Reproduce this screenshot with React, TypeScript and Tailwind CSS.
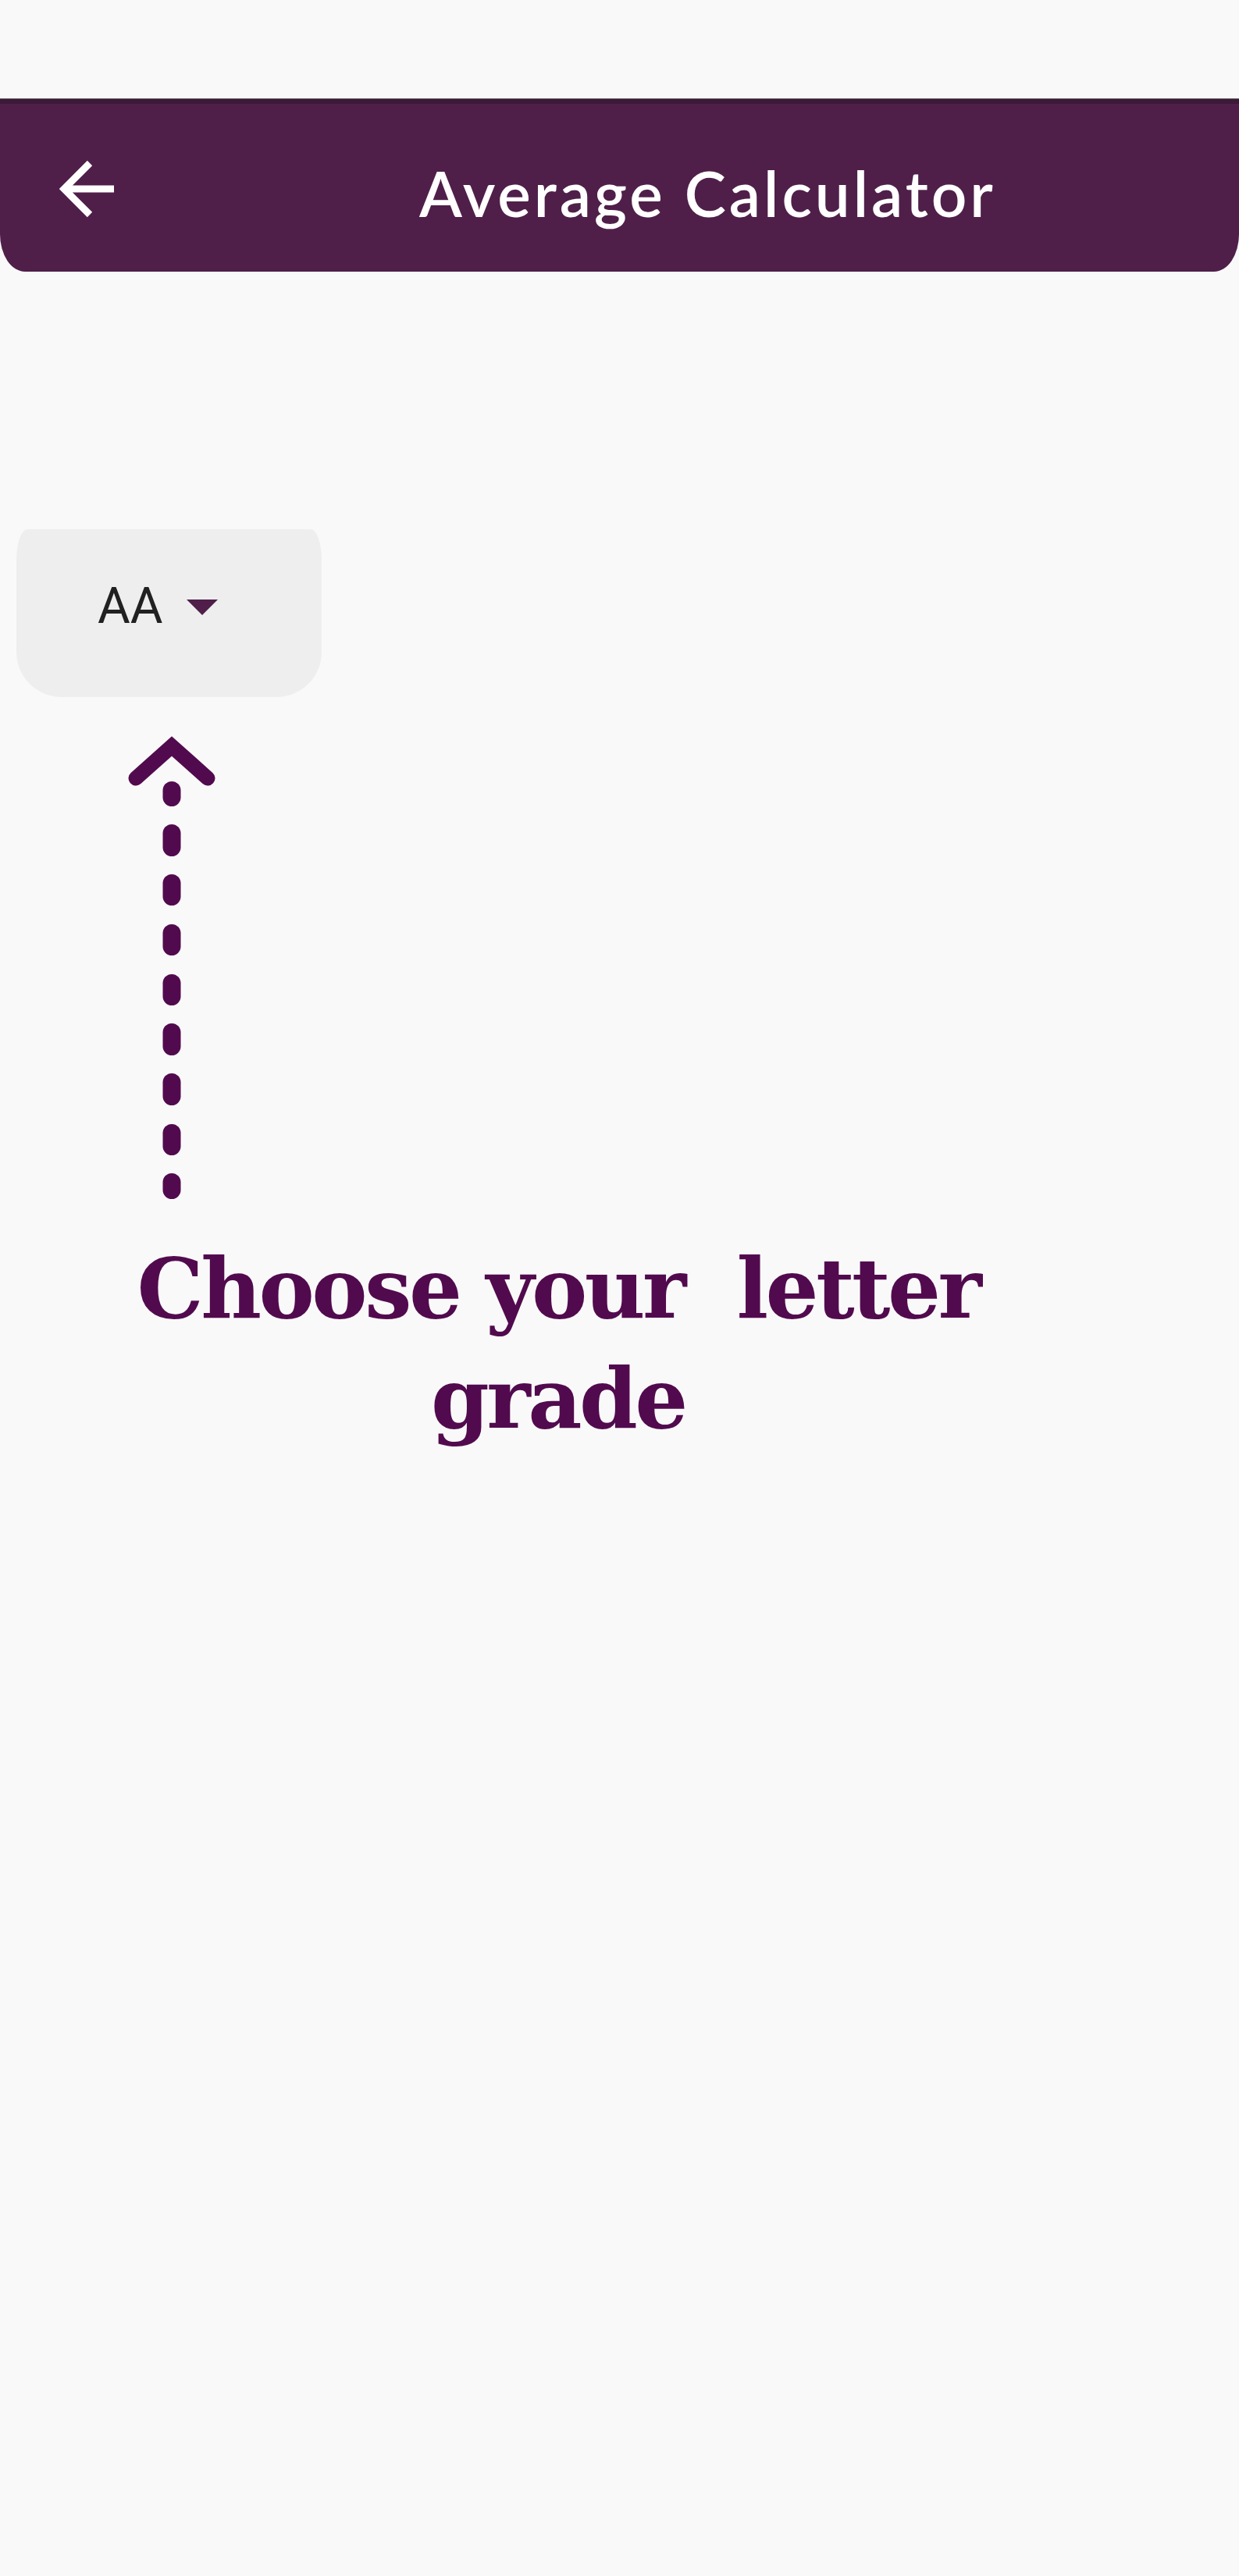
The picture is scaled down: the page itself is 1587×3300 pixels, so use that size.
import React from "react";

export default function App() {
  const dashes: [number, number][] = [
    [1001, 1033], [1056, 1097], [1120, 1160], [1184, 1224], [1248, 1288],
    [1311, 1352], [1375, 1416], [1440, 1480], [1503, 1536],
  ];
  const svgTop = 940;
  return (
    <div className="min-h-[3300px] w-full bg-[#f9f9f9]">
      <div className="h-[126px]" />
      <div className="h-[1px] bg-[#5b5560]" />
      <header className="flex h-[221px] items-center rounded-b-[32px_48px] border-t-[6px] border-[#3c1a38] bg-[#4f1f4a]">
        <div className="flex w-[226px] shrink-0 items-center pl-[76px] pt-[2px]">
          <svg width="74" height="74" viewBox="0 0 74 74" fill="none">
            <path d="M70 37 H8 M39 4 L6 37 L39 70" stroke="#ffffff" strokeWidth="9" strokeLinecap="butt" strokeLinejoin="miter" />
          </svg>
        </div>
        <h1
          className="flex-1 pt-[12px] text-center text-[80px] font-semibold leading-none tracking-[4px] text-white"
          style={{ fontFamily: "Lato, 'Noto Sans', sans-serif" }}
        >
          Average Calculator
        </h1>
      </header>

      <div className="ml-[21px] mt-[330px] flex h-[215px] w-[391px] items-center rounded-t-[14px_40px] rounded-b-[58px] bg-[#eeeeee]">
        <span
          className="mb-[18px] ml-[104px] text-[64px] leading-none text-[#212121]"
          style={{ fontFamily: "Roboto, 'Liberation Sans', sans-serif" }}
        >
          AA
        </span>
        <svg className="mb-[14px] ml-[30px]" width="40" height="21" viewBox="0 0 40 21">
          <polygon points="0,0 40,0 20,20" fill="#4f1f4a" />
        </svg>
      </div>

      <svg className="ml-[160px] mt-[47px] block" width="120" height="600" viewBox="0 0 120 600">
        <polyline
          points="14,57 60,16 106,57"
          fill="none"
          stroke="#520a4e"
          strokeWidth="19"
          strokeLinecap="round"
          strokeLinejoin="miter"
        />
        {dashes.map(([a, b], i) => (
          <rect key={i} x={60 - 11.5} y={a - svgTop} width={23} height={b - a} rx={11.5} fill="#520a4e" />
        ))}
      </svg>

      <p
        className="ml-[100px] mt-[40px] w-[1230px] text-center text-[107px] font-bold leading-[141px] tracking-[-3.5px] text-[#520a4e]"
        style={{ fontFamily: "'DejaVu Serif', serif", whiteSpace: "pre-wrap" }}
      >
        {"Choose your  letter grade"}
      </p>
    </div>
  );
}
